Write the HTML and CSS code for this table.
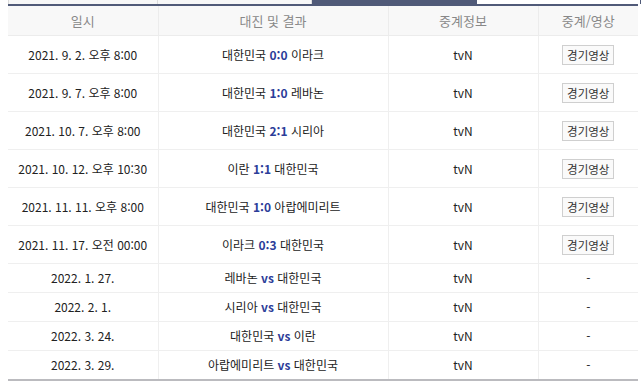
FILE: index.html
```html
<!DOCTYPE html>
<html lang="ko">
<head>
<meta charset="utf-8">
<link rel="stylesheet" href="styles.css">
</head>
<body>
<div class="wrap">
  <div class="tabs">
    <div class="tab"></div>
    <div class="tab"></div>
    <div class="tab on"></div>
    <div class="tab blank"></div>
  </div>
  <table class="sched">
    <colgroup><col class="c1"><col class="c2"><col class="c3"><col class="c4"></colgroup>
    <thead>
      <tr><th>일시</th><th>대진 및 결과</th><th>중계정보</th><th>중계/영상</th></tr>
    </thead>
    <tbody>
      <tr class="tall"><td>2021. 9. 2. 오후 8:00</td><td class="m">대한민국 <b>0:0</b> 이라크</td><td class="tv">tvN</td><td><span class="btn">경기영상</span></td></tr>
      <tr class="tall"><td>2021. 9. 7. 오후 8:00</td><td class="m">대한민국 <b>1:0</b> 레바논</td><td class="tv">tvN</td><td><span class="btn">경기영상</span></td></tr>
      <tr class="tall"><td>2021. 10. 7. 오후 8:00</td><td class="m">대한민국 <b>2:1</b> 시리아</td><td class="tv">tvN</td><td><span class="btn">경기영상</span></td></tr>
      <tr class="tall"><td>2021. 10. 12. 오후 10:30</td><td class="m">이란 <b>1:1</b> 대한민국</td><td class="tv">tvN</td><td><span class="btn">경기영상</span></td></tr>
      <tr class="tall"><td>2021. 11. 11. 오후 8:00</td><td class="m">대한민국 <b>1:0</b> 아랍에미리트</td><td class="tv">tvN</td><td><span class="btn">경기영상</span></td></tr>
      <tr class="tall"><td>2021. 11. 17. 오전 00:00</td><td class="m">이라크 <b>0:3</b> 대한민국</td><td class="tv">tvN</td><td><span class="btn">경기영상</span></td></tr>
      <tr><td>2022. 1. 27.</td><td class="m">레바논 <b>vs</b> 대한민국</td><td class="tv">tvN</td><td>-</td></tr>
      <tr><td>2022. 2. 1.</td><td class="m">시리아 <b>vs</b> 대한민국</td><td class="tv">tvN</td><td>-</td></tr>
      <tr><td>2022. 3. 24.</td><td class="m">대한민국 <b>vs</b> 이란</td><td class="tv">tvN</td><td>-</td></tr>
      <tr><td>2022. 3. 29.</td><td class="m">아랍에미리트 <b>vs</b> 대한민국</td><td class="tv">tvN</td><td>-</td></tr>
    </tbody>
  </table>
</div>
</body>
</html>
```
FILE: styles.css
```css
html, body { margin: 0; padding: 0; background: #fff; }
body {
  font-family: "Noto Sans CJK KR", "Noto Sans", sans-serif;
  font-size: 12px;
  color: #222;
}
.wrap { width: 630px; margin-left: 8px; margin-top: -1px; }
.tabs { display: flex; height: 5px; border-bottom: 2px solid #505a78; }
.tab { flex: 0 0 auto; background: #f7f7f7; border: 1px solid #dcdcdc; border-bottom: 0; }
.tab:nth-child(1) { width: 148px; }
.tab:nth-child(2) { width: 153px; border-left: 0; }
.tab.on { width: 162px; background: #505a78; border-color: #505a78; }
.tab.blank { width: 163px; background: #fff; border: 1px solid #505a78; border-bottom: 0; }
.sched { width: 630px; border-collapse: collapse; table-layout: fixed; border-bottom: 2px solid #bbbbbf; }
.c1 { width: 150px; } .c2 { width: 230px; } .c3 { width: 150px; } .c4 { width: 100px; }
.sched th {
  height: 29px; padding: 0; background: #f8f8f8; color: #888;
  font-weight: normal; font-size: 13px; border-bottom: 1px solid #ececec;
  border-left: 1px solid #ececec; text-align: center;
}
.sched td {
  height: 28px; padding: 0; text-align: center; border-bottom: 1px solid #efefef;
  border-left: 1px solid #efefef; color: #222; line-height: 16px; white-space: nowrap;
}
.sched th:first-child, .sched td:first-child { border-left: 0; }
.sched tr.tall td { height: 37px; }
.sched tbody tr:last-child td { border-bottom: 0; }
.m { color: #3d4ea6; }
.m b { color: #2c3d99; font-weight: bold; }
.tv { color: #4a5aa8; }
.btn {
  display: inline-block; box-sizing: border-box; height: 20px; line-height: 18px;
  padding: 0 4px; border: 1px solid #cfcfcf; background: #fafafa; color: #333;
  font-size: 11.5px; white-space: nowrap; vertical-align: middle;
}
```
